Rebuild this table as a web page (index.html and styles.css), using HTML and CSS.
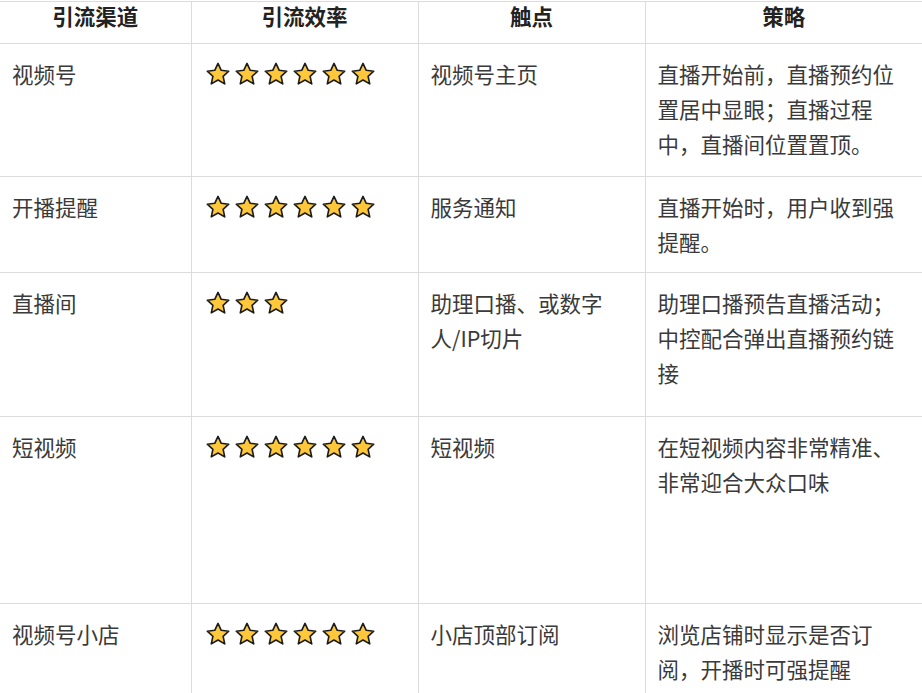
FILE: index.html
```html
<!DOCTYPE html>
<html lang="zh-CN">
<head>
<meta charset="utf-8">
<link rel="stylesheet" href="styles.css">
</head>
<body>
<svg width="0" height="0" class="defs">
  <defs>
    <symbol id="star" viewBox="0 0 24 24">
      <polygon points="12,2.2 15,8.6 21.9,9.4 16.7,14.1 18.2,21.1 12,17.5 5.8,21.1 7.3,14.1 2.1,9.4 9,8.6" fill="#FFC83A" stroke="#1c1c1c" stroke-width="1.5" stroke-linejoin="round"/>
    </symbol>
  </defs>
</svg>
<table class="tbl">
  <colgroup>
    <col class="c1"><col class="c2"><col class="c3"><col class="c4">
  </colgroup>
  <thead>
    <tr class="head">
      <th>引流渠道</th><th>引流效率</th><th>触点</th><th>策略</th>
    </tr>
  </thead>
  <tbody>
    <tr class="r1">
      <td>视频号</td>
      <td><div class="stars"><svg><use href="#star"/></svg><svg><use href="#star"/></svg><svg><use href="#star"/></svg><svg><use href="#star"/></svg><svg><use href="#star"/></svg><svg><use href="#star"/></svg></div></td>
      <td>视频号主页</td>
      <td>直播开始前，直播预约位置居中显眼；直播过程中，直播间位置置顶。</td>
    </tr>
    <tr class="r2">
      <td>开播提醒</td>
      <td><div class="stars"><svg><use href="#star"/></svg><svg><use href="#star"/></svg><svg><use href="#star"/></svg><svg><use href="#star"/></svg><svg><use href="#star"/></svg><svg><use href="#star"/></svg></div></td>
      <td>服务通知</td>
      <td>直播开始时，用户收到强提醒。</td>
    </tr>
    <tr class="r3">
      <td>直播间</td>
      <td><div class="stars"><svg><use href="#star"/></svg><svg><use href="#star"/></svg><svg><use href="#star"/></svg></div></td>
      <td>助理口播、或数字人/IP切片</td>
      <td>助理口播预告直播活动；中控配合弹出直播预约链接</td>
    </tr>
    <tr class="r4">
      <td>短视频</td>
      <td><div class="stars"><svg><use href="#star"/></svg><svg><use href="#star"/></svg><svg><use href="#star"/></svg><svg><use href="#star"/></svg><svg><use href="#star"/></svg><svg><use href="#star"/></svg></div></td>
      <td>短视频</td>
      <td>在短视频内容非常精准、非常迎合大众口味</td>
    </tr>
    <tr class="r5">
      <td>视频号小店</td>
      <td><div class="stars"><svg><use href="#star"/></svg><svg><use href="#star"/></svg><svg><use href="#star"/></svg><svg><use href="#star"/></svg><svg><use href="#star"/></svg><svg><use href="#star"/></svg></div></td>
      <td>小店顶部订阅</td>
      <td>浏览店铺时显示是否订阅，开播时可强提醒</td>
    </tr>
  </tbody>
</table>
</body>
</html>
```

FILE: styles.css
```css
html, body {
  margin: 0;
  padding: 0;
  background: #ffffff;
}
body {
  padding-top: 1px;
  font-family: "Noto Sans CJK SC", "Noto Sans", sans-serif;
  overflow: hidden;
}
.defs {
  position: absolute;
  width: 0;
  height: 0;
}
.tbl {
  border-collapse: collapse;
  table-layout: fixed;
  width: 922px;
  font-size: 21.5px;
  color: #3a3a3a;
}
.c1 { width: 191px; }
.c2 { width: 227px; }
.c3 { width: 227px; }
.c4 { width: 277px; }
.tbl th,
.tbl td {
  border: 1px solid #dcdce0;
  vertical-align: top;
  text-align: left;
}
.tbl th:first-child,
.tbl td:first-child {
  border-left: none;
}
.tbl th:last-child,
.tbl td:last-child {
  border-right: none;
}
.tbl th {
  font-weight: 700;
  color: #222222;
  text-align: center;
  line-height: 28px;
  height: 41px;
  padding: 0 12px 13px;
  box-sizing: border-box;
}
.tbl td {
  padding: 12px 12px 12px 12px;
  line-height: 35px;
}
.r1 td { height: 133px; box-sizing: border-box; }
.r2 td { height: 96px; box-sizing: border-box; }
.r3 td { height: 144px; box-sizing: border-box; }
.r4 td { height: 187px; box-sizing: border-box; }
.r5 td { height: 120px; box-sizing: border-box; }
.stars {
  display: flex;
  align-items: center;
  gap: 3px;
  height: 35px;
  padding-left: 1px;
}
.stars svg {
  width: 26px;
  height: 26px;
  flex: none;
}
```
